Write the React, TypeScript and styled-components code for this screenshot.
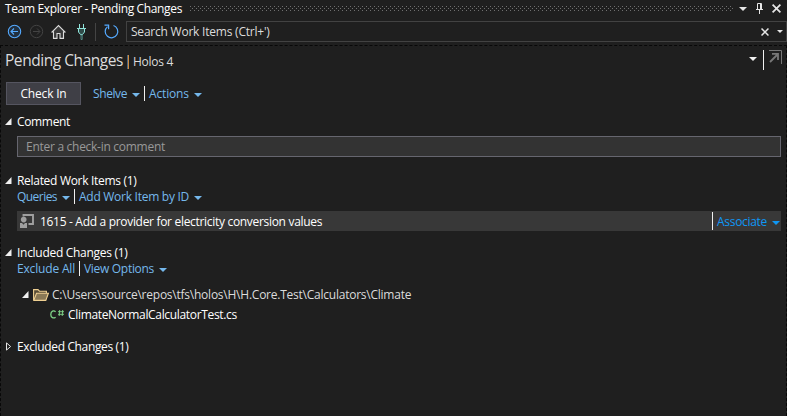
import React from "react";
import styled, { createGlobalStyle } from "styled-components";

const GlobalStyle = createGlobalStyle`
  * { box-sizing: border-box; }
  body { margin: 0; background: #1f1f1f; }
`;

const Window = styled.div`
  width: 787px;
  height: 416px;
  display: flex;
  flex-direction: column;
  overflow: hidden;
  background: #1f1f1f;
  color: #ffffff;
  font: 12px/16px "Open Sans", "Noto Sans", sans-serif;
  white-space: nowrap;
`;

const Label = styled.span<{ $track: number; $color?: string; $size?: number }>`
  letter-spacing: ${(p) => p.$track}px;
  color: ${(p) => p.$color ?? "#ffffff"};
  font-size: ${(p) => p.$size ?? 12}px;
`;

const Icon = styled.svg`
  display: block;
  flex: none;
  overflow: visible;
`;

const TitleBar = styled.header`
  display: flex;
  align-items: center;
  height: 18px;
  padding: 0 6px 1px 5px;
`;

const TitleText = styled.div`
  display: flex;
  width: 185px;
  padding-top: 1px;
`;

const TitleActions = styled.div`
  display: flex;
  align-items: center;
  gap: 9px;
  height: 16px;
  margin-left: 6px;
`;

const Toolbar = styled.nav`
  display: flex;
  align-items: center;
  height: 27px;
  padding: 0 0 0 7px;
`;

const ToolIcons = styled.div`
  display: flex;
  align-items: center;
  width: 119px;
`;

const ToolButton = styled.button<{ $width: number }>`
  display: flex;
  width: ${(p) => p.$width}px;
  padding: 0;
  border: 0;
  background: none;
`;

const SearchBox = styled.div`
  flex: 1;
  display: flex;
  align-items: center;
  height: 21px;
  padding: 1px 3px 0 4px;
  border: 1px solid #424242;
  background: #1f1f1f;
`;

const Spacer = styled.div`
  flex: 1;
`;

const SearchActions = styled.div`
  display: flex;
  align-items: center;
  gap: 8px;
  padding-bottom: 1px;
`;

const Body = styled.main`
  flex: 1;
  border: 1px dashed #080808;
  border-bottom: 0;
  padding: 0 5px 0 4px;
`;

const PageHeader = styled.div`
  display: flex;
  align-items: center;
  height: 28px;
  margin-right: -1px;
`;

const PageTitle = styled.div`
  display: flex;
  align-items: baseline;
  height: 16px;
`;

const HeaderBar = styled.span`
  align-self: center;
  width: 2px;
  height: 14px;
  margin: 4px 4px 0 4px;
  border-left: 1px solid #49647c;
  background: #d08a3c;
`;

const HeaderCaret = styled.span`
  margin-bottom: 2px;
`;

const PopOut = styled.span`
  align-self: flex-start;
  margin-top: 4px;
`;

const Separator = styled.span<{ $height?: number; $left?: number; $right?: number }>`
  flex: none;
  width: 1px;
  height: ${(p) => p.$height ?? 15}px;
  margin: 0 ${(p) => p.$right ?? 4}px ${(p) => (p.$height ? 0 : 1)}px ${(p) => p.$left ?? 4}px;
  background: #f0f0f0;
`;

const ActionBar = styled.div`
  display: flex;
  align-items: center;
  height: 24px;
  margin: 8px 0 0 1px;
`;

const CheckInButton = styled.button`
  align-self: flex-start;
  width: 75px;
  height: 23px;
  margin-right: 12px;
  padding: 1px 0 0;
  border: 1px solid #555560;
  background: #3f3f46;
  font: inherit;
`;

const LinkBox = styled.span<{ $width: number }>`
  display: flex;
  align-items: center;
  justify-content: space-between;
  width: ${(p) => p.$width}px;

  svg {
    margin-top: 2px;
  }
`;

const SectionHeader = styled.div<{ $top: number }>`
  display: flex;
  align-items: center;
  height: 16px;
  margin-top: ${(p) => p.$top}px;
`;

const Toggle = styled.span<{ $inset?: number }>`
  display: flex;
  width: 12px;
  padding: 0 0 1px ${(p) => p.$inset ?? 0}px;
`;

const CommentInput = styled.div`
  display: flex;
  align-items: center;
  height: 21px;
  margin: 6px 0 0 12px;
  padding: 1px 0 0 8px;
  border: 1px solid #66666f;
  background: #333333;
`;

const SectionLinks = styled.div`
  display: flex;
  align-items: center;
  height: 16px;
  padding-left: 12px;
`;

const WorkItem = styled.div`
  display: flex;
  align-items: center;
  height: 20px;
  margin: 6px 0 0 12px;
  padding: 0 1px 0 3px;
  background: #383838;
`;

const WorkItemText = styled.span`
  display: flex;
  flex: 1;
  padding: 2px 0 0 6px;
`;

const WorkItemAction = styled.span`
  padding-top: 2px;
`;

const TreeRow = styled.div<{ $indent: number }>`
  display: flex;
  align-items: center;
  height: 20px;
  padding-left: ${(p) => p.$indent}px;
`;

const Tree = styled.div`
  margin-top: 8px;
`;

const TreeIcon = styled.span<{ $width: number; $drop?: boolean }>`
  display: flex;
  width: ${(p) => p.$width}px;
  padding-bottom: ${(p) => (p.$drop ? 1 : 0)}px;
`;

const LINK = "#75b8ec";

const Caret = ({ color = LINK }: { color?: string }) => (
  <Icon width="8" height="4" viewBox="0 0 8 4">
    <path d="M0 0H8L4 4Z" fill={color} />
  </Icon>
);

const Cross = ({ size }: { size: number }) => (
  <Icon width={size} height={size} viewBox="0 0 9 9">
    <path d="M.6.6 8.4 8.4M8.4.6.6 8.4" stroke="#e6e6e6" strokeWidth="1.7" />
  </Icon>
);

const Expanded = () => (
  <Icon width="7" height="7" viewBox="0 0 7 7">
    <path d="M6.5 0V7H0Z" fill="#f0f0f0" />
  </Icon>
);

const Grip = () => (
  <Icon width="543" height="5">
    <defs>
      <pattern id="grip" width="4" height="4" patternUnits="userSpaceOnUse">
        <path d="M0 0h1v1H0zM2 2h1v1H2z" fill="#707070" />
      </pattern>
    </defs>
    <rect width="543" height="5" fill="url(#grip)" />
  </Icon>
);

function DropLink(p: { text: string; track: number; width: number; color?: string }) {
  return (
    <LinkBox $width={p.width}>
      <Label $track={p.track} $color={p.color ?? LINK}>{p.text}</Label>
      <Caret color={p.color} />
    </LinkBox>
  );
}

export default function App() {
  return (
    <>
      <GlobalStyle />
      <Window>
        <TitleBar>
          <TitleText>
            <Label $track={-0.355}>Team Explorer - Pending Changes</Label>
          </TitleText>
          <Grip />
          <TitleActions>
            <Caret color="#e6e6e6" />
            <Icon width="7" height="11" viewBox="0 0 7 11">
              <path d="M1.5 6.5V.5H5.5V6.5M0 6.5H7M3.5 7V11" fill="none" stroke="#e6e6e6" />
              <path d="M4 1h1v5H4z" fill="#e6e6e6" />
            </Icon>
            <Cross size={9} />
          </TitleActions>
        </TitleBar>

        <Toolbar>
          <ToolIcons>
            <ToolButton $width={22}>
              <Icon width="15" height="15" viewBox="0 0 15 15" fill="none" stroke="#55aaff">
                <circle cx="7.5" cy="7.5" r="6.2" fill="#22303f" strokeWidth="1.1" />
                <path d="M11 7.5H4.2M7 4.5 4 7.5l3 3" strokeWidth="1.1" />
              </Icon>
            </ToolButton>
            <ToolButton $width={22}>
              <Icon width="15" height="15" viewBox="0 0 15 15" fill="none" stroke="#434343">
                <circle cx="7.5" cy="7.5" r="6.2" />
                <path d="M4 7.5H10.8M8 4.5l3 3-3 3" />
              </Icon>
            </ToolButton>
            <ToolButton $width={26}>
              <Icon width="15" height="15" viewBox="0 0 15 15" fill="none" stroke="#dcdcdc">
                <path d="M2.5 7.5V14.4H6V9.5H9V14.4H12.5V7.5L7.5 2.5Z" fill="#393939" stroke="none" />
                <path d="M.6 8.5 7.5 1.6 14.4 8.5M2.5 7.5V14.4H6V9.5H9V14.4H12.5V7.5" strokeWidth="1.1" />
              </Icon>
            </ToolButton>
            <ToolButton $width={18}>
              <Icon width="9" height="17" viewBox="0 0 9 17" fill="none" stroke="#91e5db">
                <path d="M2.5 1V5M6.5 1V5M0 5.5H9" />
                <path d="M1.5 5.5V9L3.5 11.5H5.5L7.5 9V5.5Z" fill="#304a48" />
                <path d="M4 12h1.2v4.5H4z" stroke="#5c9b94" strokeWidth=".8" />
              </Icon>
            </ToolButton>
            <ToolButton $width={9}>
              <Icon width="1" height="18"><path d="M0 0h1v18H0z" fill="#444" /></Icon>
            </ToolButton>
            <ToolButton $width={16}>
              <Icon width="15" height="15" viewBox="0 0 15 15" fill="none" stroke="#55aaff" strokeWidth="1.2">
                <path d="M9.5 1.5A6.3 6.3 0 1 1 3.5 2.6M.5 1.2H4.6V5.3" />
              </Icon>
            </ToolButton>
          </ToolIcons>
          <SearchBox>
            <Label $track={-0.22} $color="#dcdcdc">Search Work Items (Ctrl+&apos;)</Label>
            <Spacer />
            <SearchActions>
              <Cross size={8} />
              <Icon width="6" height="3" viewBox="0 0 6 3"><path d="M0 0H6L3 3Z" fill="#e6e6e6" /></Icon>
            </SearchActions>
          </SearchBox>
        </Toolbar>

        <Body>
          <PageHeader>
            <PageTitle>
              <Label $track={-0.45} $size={15.5} $color="#dcdcdc">Pending Changes</Label>
              <HeaderBar />
              <Label $track={-0.28} $color="#dcdcdc">Holos 4</Label>
            </PageTitle>
            <Spacer />
            <HeaderCaret><Caret color="#f0f0f0" /></HeaderCaret>
            <Separator $height={20} $left={6} $right={5} />
            <PopOut>
              <Icon width="13" height="14" viewBox="0 0 13 14" fill="none" stroke="#777">
                <path d="M0 .5H12.5V14" />
                <path d="M1 12 9 4M3 3.9H9V10" strokeWidth="1.8" />
              </Icon>
            </PopOut>
          </PageHeader>

          <ActionBar>
            <CheckInButton><Label $track={-0.19}>Check In</Label></CheckInButton>
            <DropLink text="Shelve" track={-0.4} width={47} />
            <Separator />
            <DropLink text="Actions" track={-0.15} width={53} />
          </ActionBar>

          <SectionHeader $top={8}>
            <Toggle><Expanded /></Toggle>
            <Label $track={-0.34}>Comment</Label>
          </SectionHeader>
          <CommentInput>
            <Label $track={-0.28} $color="#999999">Enter a check-in comment</Label>
          </CommentInput>

          <SectionHeader $top={16}>
            <Toggle><Expanded /></Toggle>
            <Label $track={-0.3}>Related Work Items (1)</Label>
          </SectionHeader>
          <SectionLinks>
            <DropLink text="Queries" track={-0.54} width={53} />
            <Separator />
            <DropLink text="Add Work Item by ID" track={-0.27} width={123} />
          </SectionLinks>
          <WorkItem>
            <Icon width="14" height="14" viewBox="0 0 14 14">
              <path d="M3.5 2.5V1H13V10H8.5" fill="none" stroke="#a0a0a0" strokeWidth="1.9" />
              <circle cx="3.7" cy="5.6" r="2.8" fill="#a0a0a0" />
              <path d="M0 9H2L3.5 10.8 5 9H7V14H0Z" fill="#a0a0a0" />
            </Icon>
            <WorkItemText>
              <Label $track={-0.31}>1615 - Add a provider for electricity conversion values</Label>
            </WorkItemText>
            <Separator $height={18} />
            <WorkItemAction>
              <DropLink text="Associate" track={-0.3} width={63} color="#0f97f5" />
            </WorkItemAction>
          </WorkItem>

          <SectionHeader $top={14}>
            <Toggle><Expanded /></Toggle>
            <Label $track={-0.29}>Included Changes (1)</Label>
          </SectionHeader>
          <SectionLinks>
            <LinkBox $width={58}><Label $track={-0.17} $color={LINK}>Exclude All</Label></LinkBox>
            <Separator />
            <DropLink text="View Options" track={-0.3} width={83} />
          </SectionLinks>
          <Tree>
            <TreeRow $indent={17}>
              <TreeIcon $width={11} $drop><Expanded /></TreeIcon>
              <TreeIcon $width={19}>
                <Icon width="16" height="12" viewBox="0 0 16 12">
                  <path d="M.6 11V.6H5L6.5 2.2H13.4V4.2" fill="#574c36" stroke="#efd092" strokeWidth="1.1" />
                  <path d="M.8 11.4 3.5 4.3H15.4L12.8 11.4Z" fill="#8a7956" stroke="#efd092" strokeWidth="1.1" />
                </Icon>
              </TreeIcon>
              <Label $track={-0.238} $color="#dcdcdc">
                {"C:\\Users\\source\\repos\\tfs\\holos\\H\\H.Core.Test\\Calculators\\Climate"}
              </Label>
            </TreeRow>
            <TreeRow $indent={45}>
              <TreeIcon $width={18} $drop>
                <Icon width="14" height="9" viewBox="0 0 14 9" fill="none" stroke="#80d68a">
                  <path d="M5.6 1.7C3.7.1.8 1 .8 4.4S3.7 8.7 5.6 7.2" strokeWidth="1.3" />
                  <path d="M9.7 0 9.2 6M12.7 0 12.2 6M8 1.7H14M8 4.3H14" strokeWidth=".9" />
                </Icon>
              </TreeIcon>
              <Label $track={-0.33}>ClimateNormalCalculatorTest.cs</Label>
            </TreeRow>
          </Tree>

          <SectionHeader $top={14}>
            <Toggle $inset={1}>
              <Icon width="6" height="9" viewBox="0 0 6 9">
                <path d="M.5 .9V8.1L4.6 4.5Z" fill="none" stroke="#e6e6e6" />
              </Icon>
            </Toggle>
            <Label $track={-0.36}>Excluded Changes (1)</Label>
          </SectionHeader>
        </Body>
      </Window>
    </>
  );
}
